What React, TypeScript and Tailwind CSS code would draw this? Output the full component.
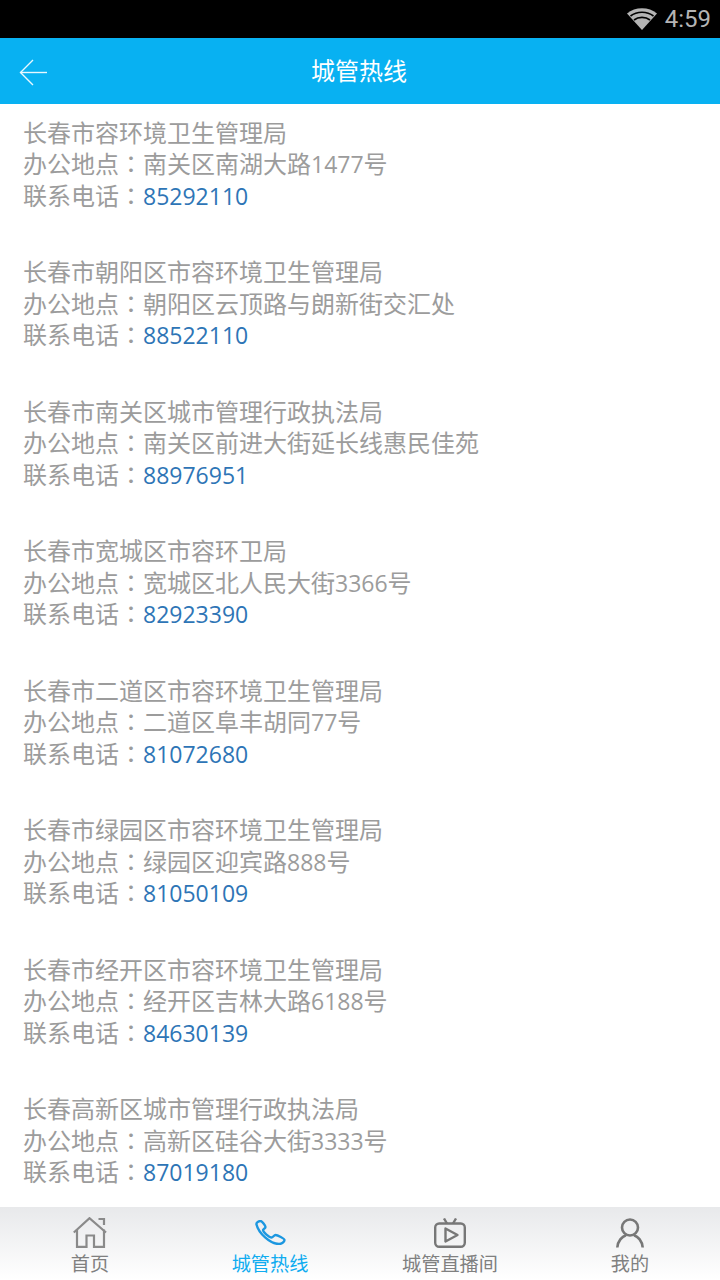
const cjk = "font-['Open_Sans','Noto_Sans_CJK_SC',sans-serif]";

const offices = [
  { name: "长春市容环境卫生管理局", addr: "南关区南湖大路1477号", tel: "85292110" },
  { name: "长春市朝阳区市容环境卫生管理局", addr: "朝阳区云顶路与朗新街交汇处", tel: "88522110" },
  { name: "长春市南关区城市管理行政执法局", addr: "南关区前进大街延长线惠民佳苑", tel: "88976951" },
  { name: "长春市宽城区市容环卫局", addr: "宽城区北人民大街3366号", tel: "82923390" },
  { name: "长春市二道区市容环境卫生管理局", addr: "二道区阜丰胡同77号", tel: "81072680" },
  { name: "长春市绿园区市容环境卫生管理局", addr: "绿园区迎宾路888号", tel: "81050109" },
  { name: "长春市经开区市容环境卫生管理局", addr: "经开区吉林大路6188号", tel: "84630139" },
  { name: "长春高新区城市管理行政执法局", addr: "高新区硅谷大街3333号", tel: "87019180" },
];

// digits run a point smaller than the Chinese text around them
const Address = ({ text }: { text: string }) => (
  <>
    {text.split(/(\d+)/).map((part, i) =>
      i % 2 === 1 ? (
        <span key={i} className="text-[23px]">
          {part}
        </span>
      ) : (
        part
      ),
    )}
  </>
);

// the TC face centres the full-width colon in its box
const Colon = () => <span className="font-['Open_Sans','Noto_Sans_CJK_TC',sans-serif]">：</span>;

const HomeIcon = () => (
  <svg width="34" height="31" viewBox="0 0 34 31" fill="none" stroke="#8a8a8a" strokeWidth="2.2">
    <path d="M0.8 15.5 L16.5 1.2 L33 15.5" />
    <path d="M25.5 2 H31 V8" />
    <path d="M4 12.5 V29.8 H13.5 V18.5 H21 V29.8 H31 V12.5" />
  </svg>
);

const PhoneIcon = () => (
  <svg width="31" height="25" viewBox="0 0 31 25" fill="none" stroke="#1c97e0" strokeWidth="2.4" strokeLinejoin="round">
    <path d="M1.5 4.5 C1 3 3.5 1 5.5 1 C7 1 10.5 5.5 10.5 7 C10.5 8.5 8 8.8 8 10 C8 12 13.5 17 16.5 17.5 C18 17.5 19 15 20.5 15 C22.5 15 29.5 18.5 29.5 20 C29.5 22 26.5 24 24 24 C15 24 3.5 13 1.5 4.5 Z" />
  </svg>
);

const TvIcon = () => (
  <svg width="32" height="30" viewBox="0 0 32 30" fill="none" stroke="#777" strokeWidth="2.4" strokeLinejoin="round">
    <rect x="1.2" y="5.5" width="29.6" height="23.3" rx="4" />
    <path d="M10 0.5 L13 5.5 M22 0.5 L19 5.5" />
    <path d="M11.5 10.5 L23.5 17 L11.5 23.5 Z" />
  </svg>
);

const UserIcon = () => (
  <svg width="28" height="30" viewBox="0 0 28 30" fill="none" stroke="#777" strokeWidth="2.6">
    <circle cx="14" cy="9.5" r="8" />
    <path d="M1.3 29.5 C1.8 23 6 18.5 10 17.2 M26.7 29.5 C26.2 23 22 18.5 18 17.2" />
  </svg>
);

const tabs = [
  { label: "首页", icon: <HomeIcon />, active: false },
  { label: "城管热线", icon: <PhoneIcon />, active: true },
  { label: "城管直播间", icon: <TvIcon />, active: false },
  { label: "我的", icon: <UserIcon />, active: false },
];

export default function App() {
  return (
    <div className={`flex h-[1280px] w-[720px] flex-col overflow-hidden bg-white ${cjk}`}>
      <div className="flex h-[38px] shrink-0 items-center justify-end gap-[8px] bg-black pr-[9px]">
        <svg width="30" height="22" viewBox="0 0 30 22" fill="#b4b4b4">
          <path d="M15 22 L0 5.5 C8 -1.5 22 -1.5 30 5.5 Z" />
          <path d="M3.5 8 C10 3 20 3 26.5 8" stroke="#000" strokeWidth="1.6" fill="none" />
          <path d="M7 12 C11.5 8.5 18.5 8.5 23 12" stroke="#000" strokeWidth="1.6" fill="none" />
        </svg>
        <span className="font-['Roboto',sans-serif] text-[24px] leading-none text-[#b4b4b4]">4:59</span>
      </div>

      <header className="relative flex h-[66px] shrink-0 items-center justify-center bg-[#08b1f2] pr-[2px]">
        <svg className="absolute left-[14px] top-[20px]" width="36" height="28" viewBox="0 0 36 28" fill="none" stroke="#e8f8ff" strokeWidth="1.4">
          <path d="M19 2 L6.5 14.5 L19 27" />
          <path d="M6.5 14.5 H33" />
        </svg>
        <h1 className="text-[24px] font-normal leading-none text-white">城管热线</h1>
      </header>

      <main className="flex min-h-0 flex-1 flex-col gap-[45px] pl-[23px] pt-[12.5px] text-[24px] leading-[31.5px] text-[#9c9c9c]">
        {offices.map((o) => (
          <div key={o.tel} className="shrink-0">
            <div className="h-[31.5px]">{o.name}</div>
            <div className="h-[31.5px]">
              办公地点<Colon />
              <Address text={o.addr} />
            </div>
            <div className="h-[31.5px]">
              联系电话<Colon />
              <span className="text-[23px] text-[#2e75b6]">{o.tel}</span>
            </div>
          </div>
        ))}
      </main>

      <nav className="grid h-[73px] shrink-0 grid-cols-4 bg-gradient-to-b from-[#e8e9eb] to-white">
        {tabs.map((t) => (
          <div key={t.label} className="flex flex-col items-center pt-[9px]">
            <div className="flex h-[33px] items-center justify-center">{t.icon}</div>
            <span className={`mt-[3px] text-[19.2px] leading-[24px] ${t.active ? "text-[#10acf0]" : "text-[#808080]"}`}>{t.label}</span>
          </div>
        ))}
      </nav>
    </div>
  );
}
